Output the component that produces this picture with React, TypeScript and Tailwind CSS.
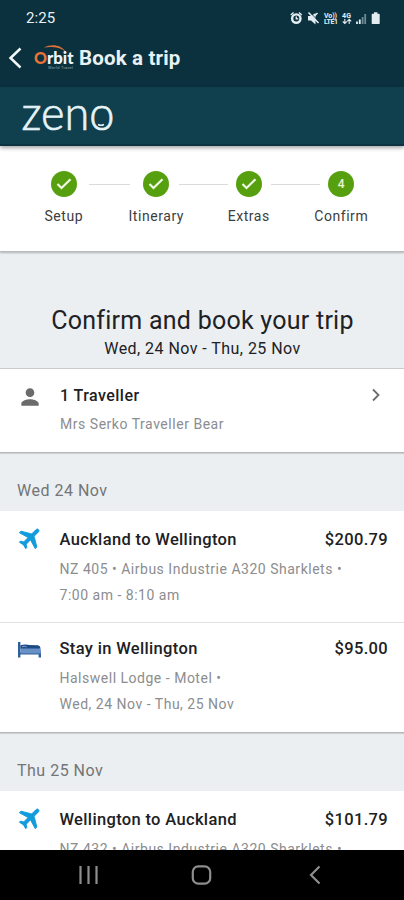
import { MdPerson } from 'react-icons/md';

const steps = [
  { label: 'Setup', done: true },
  { label: 'Itinerary', done: true },
  { label: 'Extras', done: true },
  { label: 'Confirm', done: false },
];

const connectors = [
  'left-[89px] w-[41px]',
  'left-[179px] w-[49px]',
  'left-[271px] w-[49px]',
];

const days = [
  {
    date: 'Wed 24 Nov',
    items: [
      {
        kind: 'flight',
        title: 'Auckland to Wellington',
        price: '$200.79',
        lines: ['NZ 405 • Airbus Industrie A320 Sharklets •', '7:00 am - 8:10 am'],
      },
      {
        kind: 'hotel',
        title: 'Stay in Wellington',
        price: '$95.00',
        lines: ['Halswell Lodge - Motel •', 'Wed, 24 Nov - Thu, 25 Nov'],
      },
    ],
  },
  {
    date: 'Thu 25 Nov',
    items: [
      {
        kind: 'flight',
        title: 'Wellington to Auckland',
        price: '$101.79',
        lines: ['NZ 432 • Airbus Industrie A320 Sharklets •'],
      },
    ],
  },
];

function StatusIcons() {
  return (
    <svg width="92" height="16" viewBox="0 0 92 16" fill="none" className="text-[#e3edf1]">
      {/* Alarm */}
      <circle cx="6.3" cy="8.6" r="4.2" stroke="currentColor" strokeWidth="2.4" />
      <path d="M.8 5 3.6 2.4M11.8 5 9 2.4M6.3 6.5v2.4h2" stroke="currentColor" strokeWidth="1.4" />
      {/* Muted speaker */}
      <path d="M18 6h3l4.500-3v11.500L21 10.500h-3z" fill="currentColor" />
      <path d="M19.500 2 30 12.500" stroke="#0b303e" strokeWidth="1" />
      <path d="m18.500 2.500 10 10.500M24.500 6l3-3" stroke="currentColor" strokeWidth="1.5" />
      <g fill="currentColor" fontFamily="Roboto, sans-serif" fontWeight="700" fontSize="7">
        <text x="34" y="7.6" textLength="13">Vo))</text>
        <text x="34" y="14" textLength="14">LTE1</text>
        <text x="52" y="7.6" textLength="9">4G</text>
      </g>
      <path d="M54.8 9v4.5m-2-2 2 2 2-2M59.2 14V9.4m-2 2 2-2 2 2" stroke="currentColor" strokeWidth="1.1" />
      {/* Signal */}
      <path d="M67 14v-2.500M69.800 14v-4.500" stroke="currentColor" strokeWidth="1.8" />
      <path d="M72.600 14V7M75.200 14V4" stroke="#6d8a95" strokeWidth="1.8" />
      {/* Battery */}
      <path d="M84 2.300h3.400v1.400h1.400q.9 0 .9.9v8.600q0 .9-.9.9h-6.200q-.9 0-.9-.9V4.600q0-.9.9-.9H84z" fill="currentColor" />
    </svg>
  );
}

function OrbitLogo() {
  return (
    <svg width="42" height="28" viewBox="0 0 42 28" className="shrink-0 overflow-visible">
      <path d="M11 3.600C18 -.5 28 .5 32.500 7.500 27 3.300 19 2.300 11 3.600z" fill="#d9713a" />
      <g fontFamily="Lato, sans-serif" fontWeight="900">
        <text x="1" y="20" fontSize="17" fill="#e8743a" textLength="13" lengthAdjust="spacingAndGlyphs">O</text>
        <text x="14" y="20" fontSize="17" fill="#eef5f8" textLength="26.500" lengthAdjust="spacingAndGlyphs">rbit</text>
      </g>
      <text x="15" y="25" fontSize="4" fill="#8fa5ae" fontFamily="Roboto, sans-serif" textLength="25">World Travel</text>
    </svg>
  );
}

function ZenoLogo() {
  return (
    <svg width="94" height="36" viewBox="0 0 94 36" className="overflow-visible">
      <text
        x="-.5"
        y="30.500"
        fontFamily="Lato, sans-serif"
        fontWeight="300"
        fontSize="47"
        fill="#e6f4f8"
        stroke="#e6f4f8"
        strokeWidth=".7"
        textLength="93"
        lengthAdjust="spacingAndGlyphs"
      >
        zeno
      </text>
      <path d="M76 25.500q3 1.500 6 0" stroke="#e6f4f8" strokeWidth="1.500" fill="none" />
    </svg>
  );
}

function PlaneIcon() {
  return (
    <svg width="27" height="27" viewBox="0 0 24 24" className="-mt-[4px] overflow-visible">
      <path
        d="M22 16v-2l-8.500-5V3.500a1.500 1.500 0 0 0-3 0V9L2 14v2l8.500-2.500V19L8 20.500V22l4-1 4 1v-1.500L13.500 19v-5.500z"
        transform="rotate(45 12 12)"
        fill="#149bdc"
        stroke="#149bdc"
        strokeWidth=".8"
        strokeLinejoin="round"
      />
    </svg>
  );
}

function BedIcon() {
  return (
    <svg width="26" height="18" viewBox="0 0 26 18" className="mt-[4px]">
      <path d="M1 1h2.400v10h20.600v5.500h-2.400v-3H3.400v3H1z" fill="#2d5f9e" />
      <path d="M3.400 7h18.600q2 0 2 2.500v3H3.400z" fill="#6690c6" />
      <path d="M3.400 4.200q5-1.200 9-.2l8.500.3q2.300.3 2.800 3.200H3.400z" fill="#1f4b85" />
      <path d="M5 5.800q2.500-1 4.500 0" stroke="#7ea5d3" strokeWidth="1" fill="none" />
    </svg>
  );
}

export default function App() {
  return (
    <div className="flex h-[900px] w-[404px] flex-col overflow-hidden bg-[#ebeff2] font-['Roboto',sans-serif] text-[#202124]">
      {/* App header */}
      <header className="h-[87px] shrink-0 bg-[#0b303e] text-[#e8f1f4]">
        <div className="flex h-9 items-center justify-between pr-[22px] pl-[26px]">
          <span className="text-[15px] tracking-[0.1px]">2:25</span>
          <StatusIcons />
        </div>
        <div className="flex h-11 items-center pl-2">
          <svg width="15" height="22" viewBox="0 0 15 22" fill="none" className="mr-[10px] shrink-0">
            <path d="M12.500 1.500 2.500 11l10 9.500" stroke="#f2f8fa" strokeWidth="2.500" />
          </svg>
          <OrbitLogo />
          <h1 className="ml-1 text-[20.5px] font-bold tracking-[0.15px] whitespace-nowrap">Book a trip</h1>
        </div>
      </header>

      <div className="z-10 h-[59px] shrink-0 border-b-2 border-[#0b3344] bg-[#10404e] pt-3 pl-[22px] shadow-[0_2px_4px_rgba(0,0,0,0.35)]">
        <ZenoLogo />
      </div>

      {/* Progress */}
      <section className="relative h-[106px] shrink-0 border-b border-[#b9bcbe] bg-white px-[17.5px] pt-[25px] shadow-[0_1px_2px_rgba(0,0,0,0.25)]">
        {connectors.map((pos) => (
          <span key={pos} className={`absolute top-[38px] h-px bg-[#d9dadb] ${pos}`} />
        ))}
        <div className="flex">
          {steps.map(({ label, done }, i) => (
            <div key={label} className="flex w-[92.5px] shrink-0 flex-col items-center">
              <span className="flex size-[26px] items-center justify-center rounded-full bg-[#56a010] text-[12px] font-medium text-[#e9f6dc]">
                {done ? (
                  <svg width="16" height="12" viewBox="0 0 16 12" fill="none">
                    <path d="m1.500 6 4 4L14.500 1.200" stroke="#f1fae6" strokeWidth="2.200" />
                  </svg>
                ) : (
                  i + 1
                )}
              </span>
              <span className="mt-[9px] text-[14px] leading-5 tracking-[0.55px] text-[#3c3d3e]">{label}</span>
            </div>
          ))}
        </div>
      </section>

      <section className="h-[116px] shrink-0 pt-[53px] text-center">
        <h2 className="pl-px text-[25px] leading-8 tracking-[0.25px] whitespace-nowrap">Confirm and book your trip</h2>
        <p className="pl-px text-[16px] leading-6 tracking-[0.45px]">Wed, 24 Nov - Thu, 25 Nov</p>
      </section>

      {/* Traveller */}
      <section className="flex h-[85px] shrink-0 border-y border-t-[#c8cbcd] border-b-[#b4b6b8] bg-white pt-[15px] pr-4 shadow-[0_1px_1px_rgba(0,0,0,0.12)]">
        <div className="w-[60px] shrink-0 pl-[17px]">
          <MdPerson className="size-[26px] text-[#6b6b6b]" />
        </div>
        <div className="flex-1">
          <h3 className="text-[16px] leading-6 font-medium tracking-[0.45px]">1 Traveller</h3>
          <p className="mt-[4px] text-[14px] leading-6 tracking-[0.53px] text-[#8b8d8f]">Mrs Serko Traveller Bear</p>
        </div>
        <svg width="10" height="14" viewBox="0 0 10 14" fill="none" className="mt-1 mr-[7px]">
          <path d="m2 1.500 5.500 5.500L2 12.500" stroke="#6a6c6e" strokeWidth="1.800" />
        </svg>
      </section>

      {/* Itinerary */}
      <main className="min-h-0 flex-1 overflow-hidden">
        {days.map(({ date, items }) => (
          <section key={date}>
            <h4 className="h-[58px] pt-[26px] pl-[17px] text-[16px] leading-6 tracking-[0.5px] text-[#737577]">{date}</h4>
            <div className="border-b border-[#b4b6b8] bg-white shadow-[0_1px_1px_rgba(0,0,0,0.12)]">
              {items.map(({ kind, title, price, lines }, i) => (
                <div
                  key={title}
                  className={`flex pr-4 ${i > 0 ? 'h-[110px] border-t border-[#dfe1e3] pt-[14px]' : 'h-[111px] pt-[17px]'}`}
                >
                  <div className="w-[59.5px] shrink-0 pl-[17px]">
                    {kind === 'flight' ? <PlaneIcon /> : <BedIcon />}
                  </div>
                  <div className="flex-1">
                    <div className="flex justify-between text-[16.5px] leading-6 font-medium tracking-[0.34px]">
                      <h3>{title}</h3>
                      <span>{price}</span>
                    </div>
                    <div className="mt-[4px] text-[14px] leading-[26px] tracking-[0.51px] whitespace-nowrap text-[#8b8d8f]">
                      {lines.map((line) => (
                        <p key={line}>{line}</p>
                      ))}
                    </div>
                  </div>
                </div>
              ))}
            </div>
          </section>
        ))}
      </main>

      {/* System navigation */}
      <nav className="z-10 h-[50px] shrink-0 bg-black">
        <svg width="404" height="50" viewBox="0 0 404 50" fill="none" stroke="#8e8e8e" strokeWidth="2.200">
          <path d="M80.500 16v18M88.500 16v18M96.500 16v18" />
          <rect x="192.800" y="16.300" width="17.400" height="17.400" rx="5.500" />
          <path d="m319.500 16.500-8.500 8.500 8.500 8.500" />
        </svg>
      </nav>
    </div>
  );
}
